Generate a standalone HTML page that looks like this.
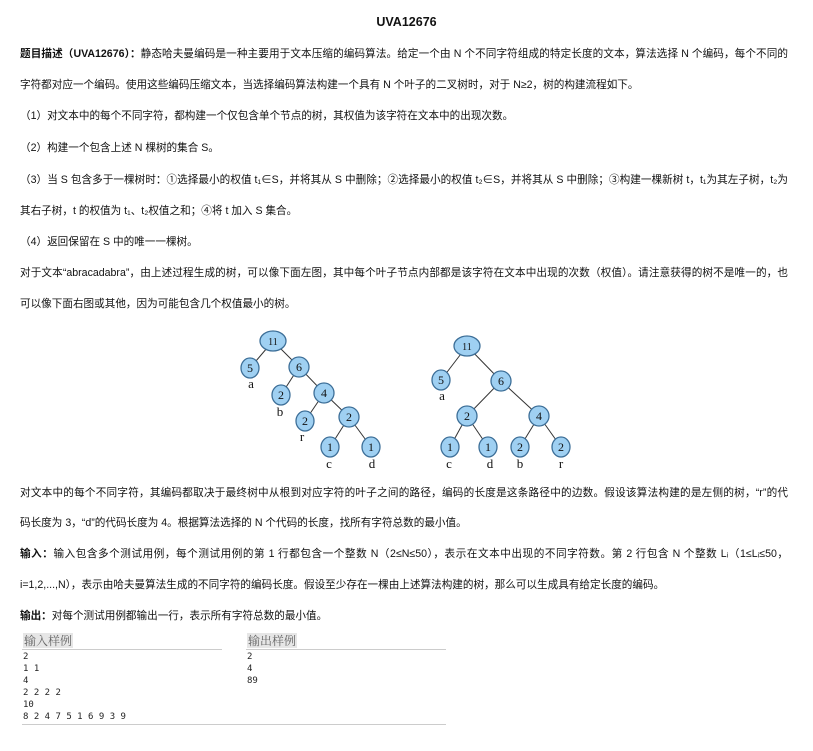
<!DOCTYPE html>
<html><head><meta charset="utf-8"><style>
body{margin:0;width:813px;height:751px;background:#fff;font-family:"Liberation Sans","Noto Sans CJK SC",sans-serif;font-size:10.6px;color:#111;position:relative;overflow:hidden}
.l{position:absolute;left:20px;white-space:nowrap;line-height:16px}
.j{width:768px;font-size:10.6px;text-align:justify;text-align-last:justify;white-space:normal;height:16px;overflow:hidden}
b{font-weight:bold}
.h{position:absolute;top:620px;font-family:"Noto Serif CJK SC",serif;font-size:12px;color:#666;background:#e6e6e6;line-height:15px;padding:0 1px}
.rule{position:absolute;height:1px;background:#ccc}
pre{position:absolute;margin:0;font-family:"DejaVu Sans Mono",monospace;font-size:9px;line-height:12px;color:#222}
</style></head><body>
<div class="l" style="left:0;width:813px;text-align:center;top:14px;font-weight:bold;font-size:12.5px">UVA12676</div>
<div class="l j" style="top:46px"><b>题目描述（UVA12676）：</b>静态哈夫曼编码是一种主要用于文本压缩的编码算法。给定一个由 N 个不同字符组成的特定长度的文本，算法选择 N 个编码，每个不同的</div>
<div class="l" style="top:77px">字符都对应一个编码。使用这些编码压缩文本，当选择编码算法构建一个具有 N 个叶子的二叉树时，对于 N≥2，树的构建流程如下。</div>
<div class="l" style="top:108px">（1）对文本中的每个不同字符，都构建一个仅包含单个节点的树，其权值为该字符在文本中的出现次数。</div>
<div class="l" style="top:140px">（2）构建一个包含上述 N 棵树的集合 S。</div>
<div class="l j" style="top:172px">（3）当 S 包含多于一棵树时：①选择最小的权值 t₁∈S，并将其从 S 中删除；②选择最小的权值 t₂∈S，并将其从 S 中删除；③构建一棵新树 t，t₁为其左子树，t₂为</div>
<div class="l" style="top:203px">其右子树，t 的权值为 t₁、t₂权值之和；④将 t 加入 S 集合。</div>
<div class="l" style="top:234px">（4）返回保留在 S 中的唯一一棵树。</div>
<div class="l j" style="top:265px">对于文本“abracadabra”，由上述过程生成的树，可以像下面左图，其中每个叶子节点内部都是该字符在文本中出现的次数（权值）。请注意获得的树不是唯一的，也</div>
<div class="l" style="top:296px">可以像下面右图或其他，因为可能包含几个权值最小的树。</div>
<svg style="position:absolute;left:0;top:0" width="813" height="751" font-family="Liberation Serif,serif">
<g stroke="#333" stroke-width="1">
<line x1="273" y1="341" x2="250" y2="368"/><line x1="273" y1="341" x2="299" y2="367"/>
<line x1="299" y1="367" x2="281" y2="395"/><line x1="299" y1="367" x2="324" y2="393"/>
<line x1="324" y1="393" x2="305" y2="421"/><line x1="324" y1="393" x2="349" y2="417"/>
<line x1="349" y1="417" x2="330" y2="447"/><line x1="349" y1="417" x2="371" y2="447"/>
<line x1="467" y1="346" x2="441" y2="380"/><line x1="467" y1="346" x2="501" y2="381"/>
<line x1="501" y1="381" x2="467" y2="416"/><line x1="501" y1="381" x2="539" y2="416"/>
<line x1="467" y1="416" x2="450" y2="447"/><line x1="467" y1="416" x2="488" y2="447"/>
<line x1="539" y1="416" x2="520" y2="447"/><line x1="539" y1="416" x2="561" y2="447"/>
</g>
<g fill="#9fd0f2" stroke="#3d6f98" stroke-width="1.3">
<ellipse cx="273" cy="341" rx="13" ry="10"/><ellipse cx="250" cy="368" rx="9" ry="10"/><ellipse cx="299" cy="367" rx="10" ry="10"/>
<ellipse cx="281" cy="395" rx="9" ry="10"/><ellipse cx="324" cy="393" rx="10" ry="10"/><ellipse cx="305" cy="421" rx="9" ry="10"/>
<ellipse cx="349" cy="417" rx="10" ry="10"/><ellipse cx="330" cy="447" rx="9" ry="10"/><ellipse cx="371" cy="447" rx="9" ry="10"/>
<ellipse cx="467" cy="346" rx="13" ry="10"/><ellipse cx="441" cy="380" rx="9" ry="10"/><ellipse cx="501" cy="381" rx="10" ry="10"/>
<ellipse cx="467" cy="416" rx="10" ry="10"/><ellipse cx="539" cy="416" rx="10" ry="10"/>
<ellipse cx="450" cy="447" rx="9" ry="10"/><ellipse cx="488" cy="447" rx="9" ry="10"/><ellipse cx="520" cy="447" rx="9" ry="10"/><ellipse cx="561" cy="447" rx="9" ry="10"/>
</g>
<g font-size="12" text-anchor="middle" fill="#111">
<text x="273" y="345" font-size="10">11</text><text x="250" y="372">5</text><text x="299" y="371">6</text><text x="281" y="399">2</text><text x="324" y="397">4</text><text x="305" y="425">2</text><text x="349" y="421">2</text><text x="330" y="451">1</text><text x="371" y="451">1</text>
<text x="467" y="350" font-size="10">11</text><text x="441" y="384">5</text><text x="501" y="385">6</text><text x="467" y="420">2</text><text x="539" y="420">4</text><text x="450" y="451">1</text><text x="488" y="451">1</text><text x="520" y="451">2</text><text x="561" y="451">2</text>
<g font-size="13"><text x="251" y="388">a</text><text x="280" y="416">b</text><text x="302" y="441">r</text><text x="329" y="468">c</text><text x="372" y="468">d</text>
<text x="442" y="400">a</text><text x="449" y="468">c</text><text x="490" y="468">d</text><text x="520" y="468">b</text><text x="561" y="468">r</text></g>
</g>
</svg>
<div class="l j" style="top:485px">对文本中的每个不同字符，其编码都取决于最终树中从根到对应字符的叶子之间的路径，编码的长度是这条路径中的边数。假设该算法构建的是左侧的树，“r”的代</div>
<div class="l" style="top:515px">码长度为 3，“d”的代码长度为 4。根据算法选择的 N 个代码的长度，找所有字符总数的最小值。</div>
<div class="l j" style="top:546px"><b>输入：</b>输入包含多个测试用例，每个测试用例的第 1 行都包含一个整数 N（2≤N≤50），表示在文本中出现的不同字符数。第 2 行包含 N 个整数 Lᵢ（1≤Lᵢ≤50，</div>
<div class="l" style="top:577px">i=1,2,...,N），表示由哈夫曼算法生成的不同字符的编码长度。假设至少存在一棵由上述算法构建的树，那么可以生成具有给定长度的编码。</div>
<div class="l" style="top:608px"><b>输出：</b>对每个测试用例都输出一行，表示所有字符总数的最小值。</div>
<div class="h" style="left:23px;top:633px">输入样例</div>
<div class="h" style="left:247px;top:633px">输出样例</div>
<div class="rule" style="left:22px;width:200px;top:649px"></div>
<div class="rule" style="left:246px;width:200px;top:649px"></div>
<pre style="left:23px;top:651px">2
1 1
4
2 2 2 2
10
8 2 4 7 5 1 6 9 3 9</pre>
<pre style="left:247px;top:651px">2
4
89</pre>
<div class="rule" style="left:22px;width:424px;top:724px"></div>
</body></html>
